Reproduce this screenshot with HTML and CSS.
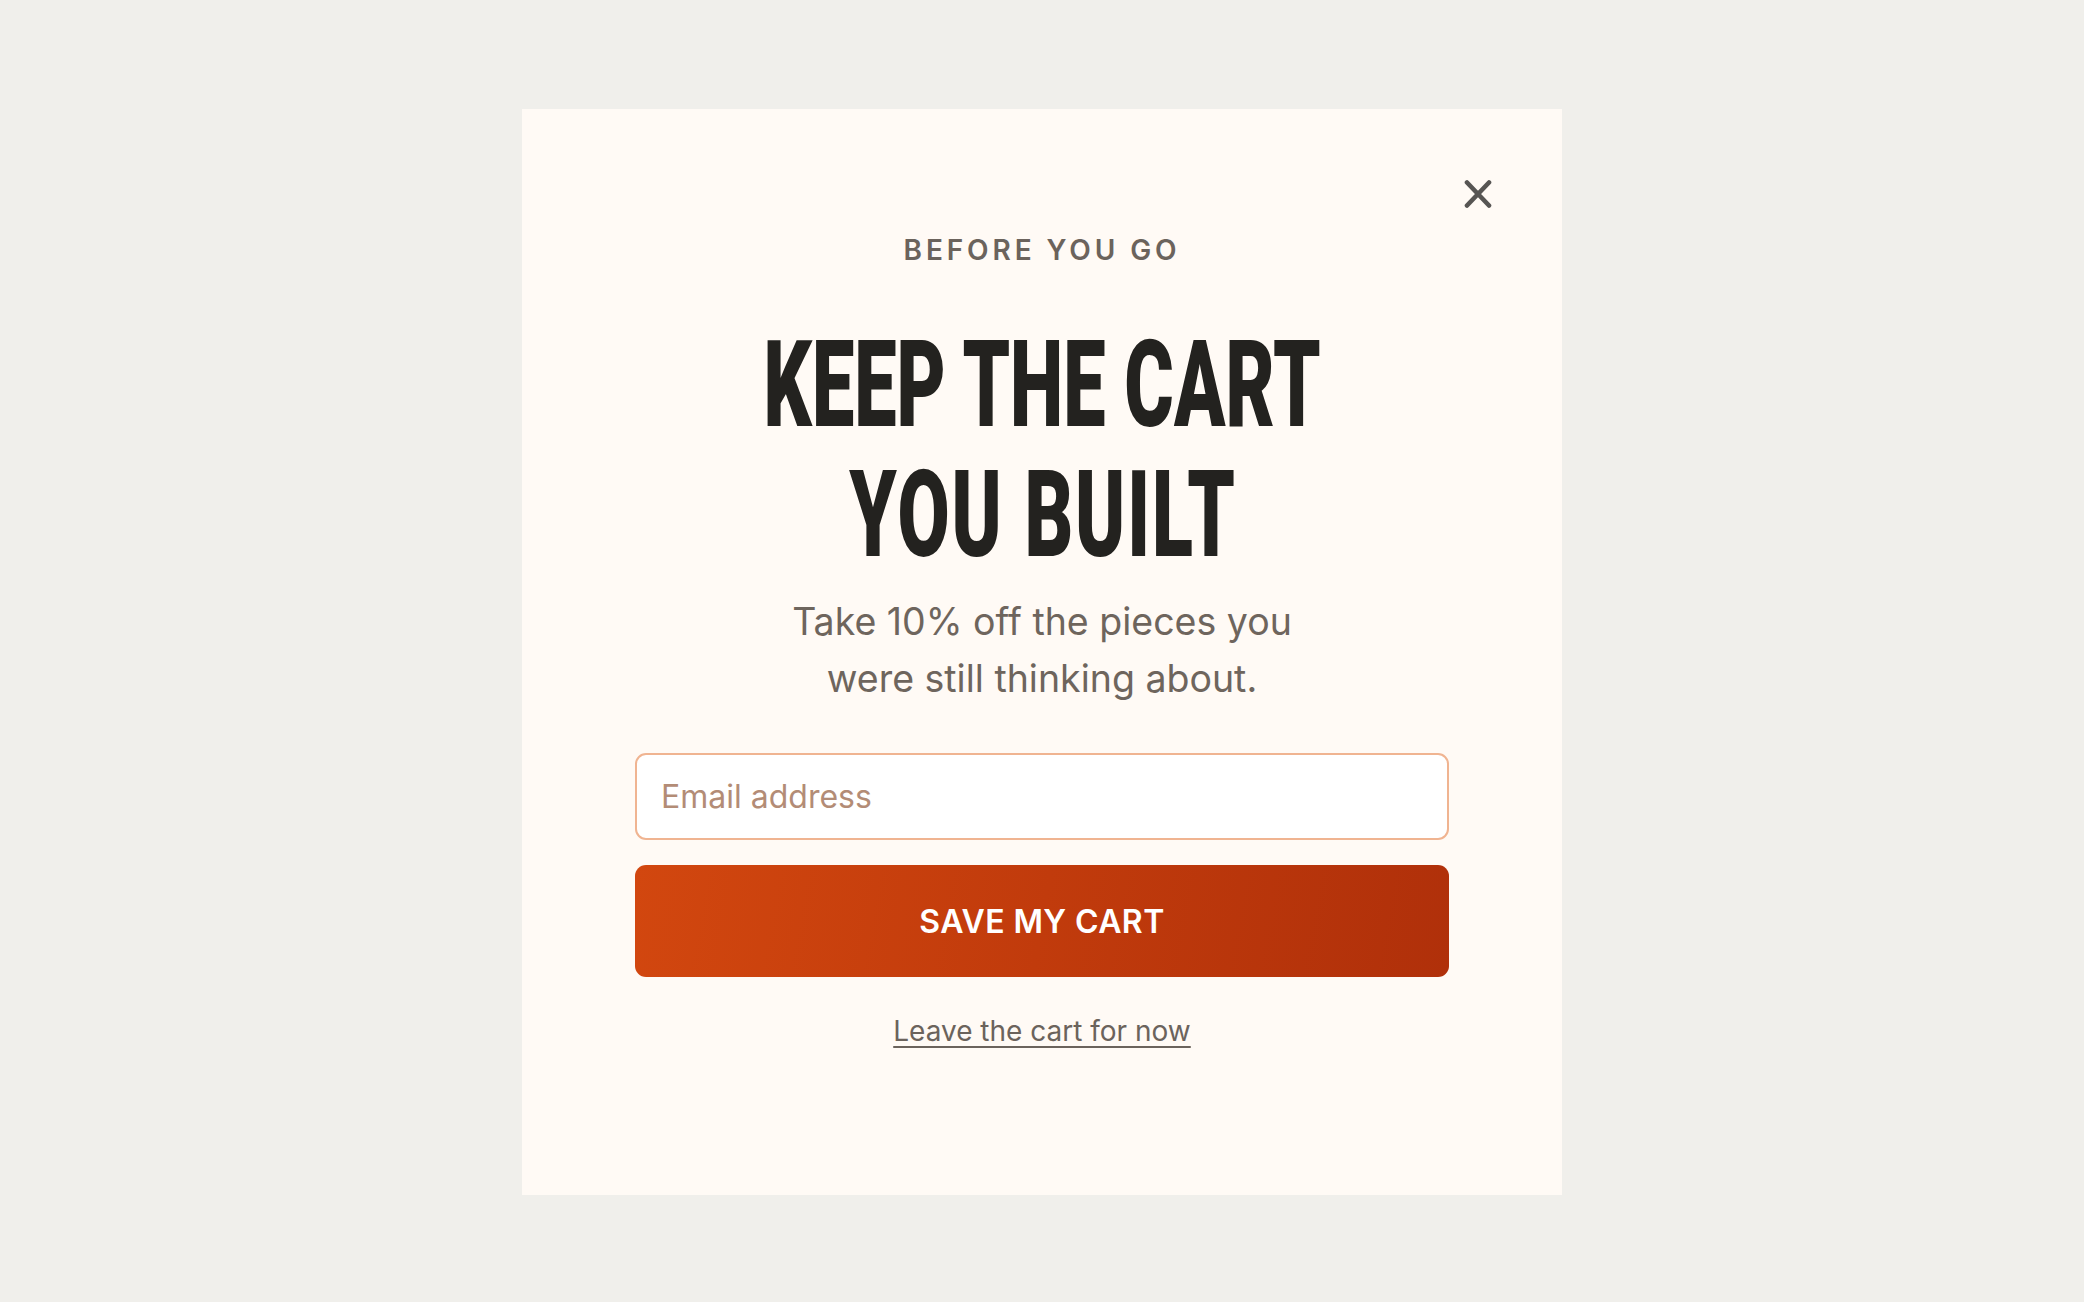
FILE: index.html
```html
<!DOCTYPE html>
<html lang="en">
<head>
<meta charset="utf-8">
<title>Before you go</title>
<link rel="stylesheet" href="styles.css">
</head>
<body>
<div class="overlay">
  <div class="modal" role="dialog" aria-labelledby="title">
    <button class="close" type="button" aria-label="Close">
      <svg width="28" height="30" viewBox="0 0 28 30" aria-hidden="true"><path d="M3 3.5 L25 26.5 M25 3.5 L3 26.5" stroke="#575553" stroke-width="4.6" stroke-linecap="round" fill="none"/></svg>
    </button>
    <p class="eyebrow">BEFORE YOU GO</p>
    <h1 class="title" id="title"><span class="title-inner"><span class="title-line">KEEP THE CART</span><span class="title-line title-line-2">YOU BUILT</span></span></h1>
    <p class="lede">Take 10% off the pieces you<br>were still thinking about.</p>
    <form class="form">
      <input class="email" type="email" placeholder="Email address">
      <button class="cta" type="button">SAVE MY CART</button>
    </form>
    <a class="leave" href="#">Leave the cart for now</a>
  </div>
</div>
</body>
</html>
```

FILE: styles.css
```css
* { box-sizing: border-box; }
html, body { margin: 0; padding: 0; }
body {
  background: #f0efeb;
  font-family: "Inter", "Noto Sans", sans-serif;
}
.overlay {
  height: 100vh;
  display: flex;
  align-items: center;
  justify-content: center;
}
.modal {
  position: relative;
  width: 1040px;
  height: 1086px;
  margin-top: 2px;
  background: #fffaf5;
  padding: 124px 113px 0;
  display: flex;
  flex-direction: column;
  align-items: center;
}
.close {
  position: absolute;
  top: 70px;
  right: 70px;
  width: 28px;
  height: 30px;
  padding: 0;
  border: 0;
  background: none;
  cursor: pointer;
  display: flex;
}
.eyebrow {
  margin: 0;
  font-size: 28px;
  line-height: 34px;
  font-weight: 600;
  letter-spacing: 3.9px;
  color: #6b635c;
  text-align: center;
}
.title {
  margin: 53px 0 0;
  width: 100%;
  font-family: "Roboto", "Liberation Sans", sans-serif;
  font-weight: 900;
  font-size: 120px;
  line-height: 130px;
  color: #23221f;
  white-space: nowrap;
  display: flex;
  justify-content: center;
}
.title-inner {
  display: flex;
  flex-direction: column;
  align-items: center;
  flex: none;
  transform: scaleX(0.63);
  transform-origin: center;
}
.title-line { display: block; }
.title-line-2 {
  letter-spacing: 3px;
  margin-right: -3px;
}
.lede {
  margin: 13px 0 0;
  font-size: 37.5px;
  line-height: 57px;
  color: #6e655d;
  text-align: center;
}
.form {
  margin-top: 46px;
  width: 100%;
  display: flex;
  flex-direction: column;
  gap: 25px;
}
.email {
  width: 100%;
  height: 87px;
  border: 2px solid #f0b491;
  border-radius: 11px;
  background: #ffffff;
  padding: 0 24px;
  font-family: inherit;
  font-size: 32px;
  color: #3a342f;
  outline: none;
}
.email::placeholder { color: #b38c76; }
.cta {
  width: 100%;
  height: 112px;
  border: 0;
  border-radius: 11px;
  background: linear-gradient(100deg, #d2470f 0%, #c13b0c 50%, #b0300a 100%);
  color: #ffffff;
  font-family: inherit;
  font-size: 32px;
  font-weight: 600;
  letter-spacing: 0.4px;
  cursor: pointer;
}
.leave {
  margin-top: 34px;
  font-size: 28px;
  line-height: 40px;
  color: #6b635c;
  text-decoration: underline;
  text-underline-offset: 5px;
  text-decoration-thickness: 2px;
}
```
